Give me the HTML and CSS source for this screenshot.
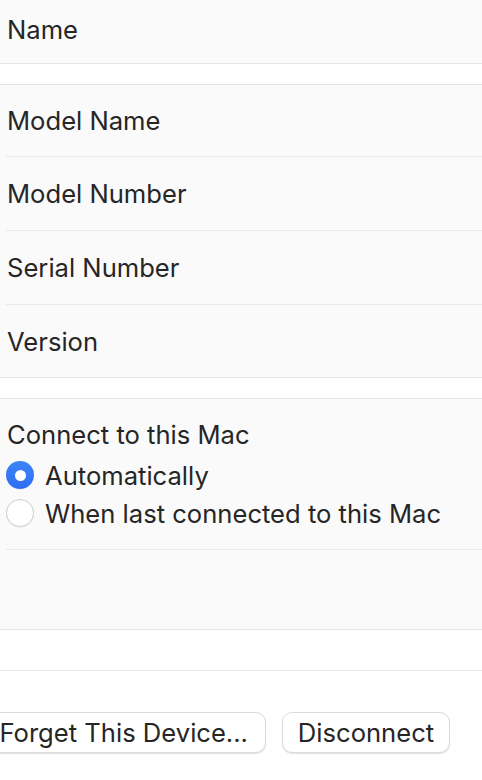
FILE: index.html
```html
<!DOCTYPE html>
<html>
<head>
<meta charset="utf-8">
<link rel="stylesheet" href="styles.css">
</head>
<body>
<div class="page">
  <section class="group group-name">
    <div class="row row-single">Name</div>
  </section>
  <div class="gap"></div>
  <section class="group">
    <div class="row row-first">Model Name</div>
    <div class="row">Model Number</div>
    <div class="row">Serial Number</div>
    <div class="row last">Version</div>
  </section>
  <div class="gap"></div>
  <section class="group group-connect">
    <div class="connect">
      <div class="label">Connect to this Mac</div>
      <label class="radio-row"><span class="radio checked"></span><span>Automatically</span></label>
      <label class="radio-row"><span class="radio"></span><span>When last connected to this Mac</span></label>
    </div>
    <div class="empty"></div>
  </section>
  <div class="gap gap-large"></div>
  <div class="buttons">
    <button class="btn btn-forget">Forget This Device...</button>
    <button class="btn btn-disconnect">Disconnect</button>
  </div>
</div>
</body>
</html>
```

FILE: styles.css
```css
html, body {
  margin: 0;
  padding: 0;
  background: #ffffff;
}
body {
  font-family: "Inter", "Liberation Sans", Arial, sans-serif;
  font-size: 25.6px;
  color: #262626;
  overflow: hidden;
  width: 482px;
  height: 780px;
}
.page {
  display: flex;
  flex-direction: column;
}
.group {
  background: #fafafa;
  border-bottom: 1px solid #e6e6e6;
  padding-left: 7px;
}
.group-name {
  height: 63px;
  display: flex;
  align-items: center;
}
.gap {
  height: 20px;
  border-bottom: 1px solid #e6e6e6;
}
.gap-large {
  height: 40px;
}
.row {
  height: 73px;
  display: flex;
  align-items: center;
  border-bottom: 1px solid #e9e9e9;
  margin-left: -1px;
  padding-left: 1px;
}
.row-first {
  height: 71px;
}
.row-single {
  border-bottom: none;
  height: auto;
  padding-bottom: 4px;
}
.row.last {
  border-bottom: none;
  height: 72px;
}
.group-connect {
  height: 230px;
  display: flex;
  flex-direction: column;
}
.connect {
  padding-top: 20px;
  height: 151px;
  box-sizing: border-box;
  border-bottom: 1px solid #e9e9e9;
  margin-left: -1px;
  padding-left: 1px;
  display: flex;
  flex-direction: column;
  flex: none;
}
.label {
  line-height: 32px;
  margin-bottom: 5px;
}
.radio-row {
  display: flex;
  align-items: center;
  gap: 11px;
  height: 38px;
  flex: none;
  margin-left: -1px;
}
.radio {
  width: 28px;
  height: 28px;
  border-radius: 50%;
  box-sizing: border-box;
  border: 1px solid #cfcfcf;
  background: #ffffff;
  box-shadow: 0 0.5px 1px rgba(0,0,0,0.08);
  flex: none;
  position: relative;
}
.radio.checked {
  border: none;
  background: linear-gradient(#3c84f7, #2f6ef5);
}
.radio.checked::after {
  content: "";
  position: absolute;
  left: 50%;
  top: 50%;
  width: 11px;
  height: 11px;
  margin: -5.5px 0 0 -5.5px;
  border-radius: 50%;
  background: #ffffff;
}
.buttons {
  display: flex;
  gap: 16px;
  padding-top: 41px;
  margin-left: -13px;
}
.btn {
  font-family: inherit;
  font-size: 25.6px;
  color: #262626;
  background: #ffffff;
  border: 1px solid #dcdcdc;
  border-radius: 10px;
  height: 41px;
  padding: 0 10px;
  box-shadow: 0 1px 1px rgba(0,0,0,0.12);
  line-height: 1;
  white-space: nowrap;
}
.btn-forget {
  width: 279px;
  text-align: right;
  padding-right: 17px;
}
.btn-disconnect {
  width: 168px;
}
```
